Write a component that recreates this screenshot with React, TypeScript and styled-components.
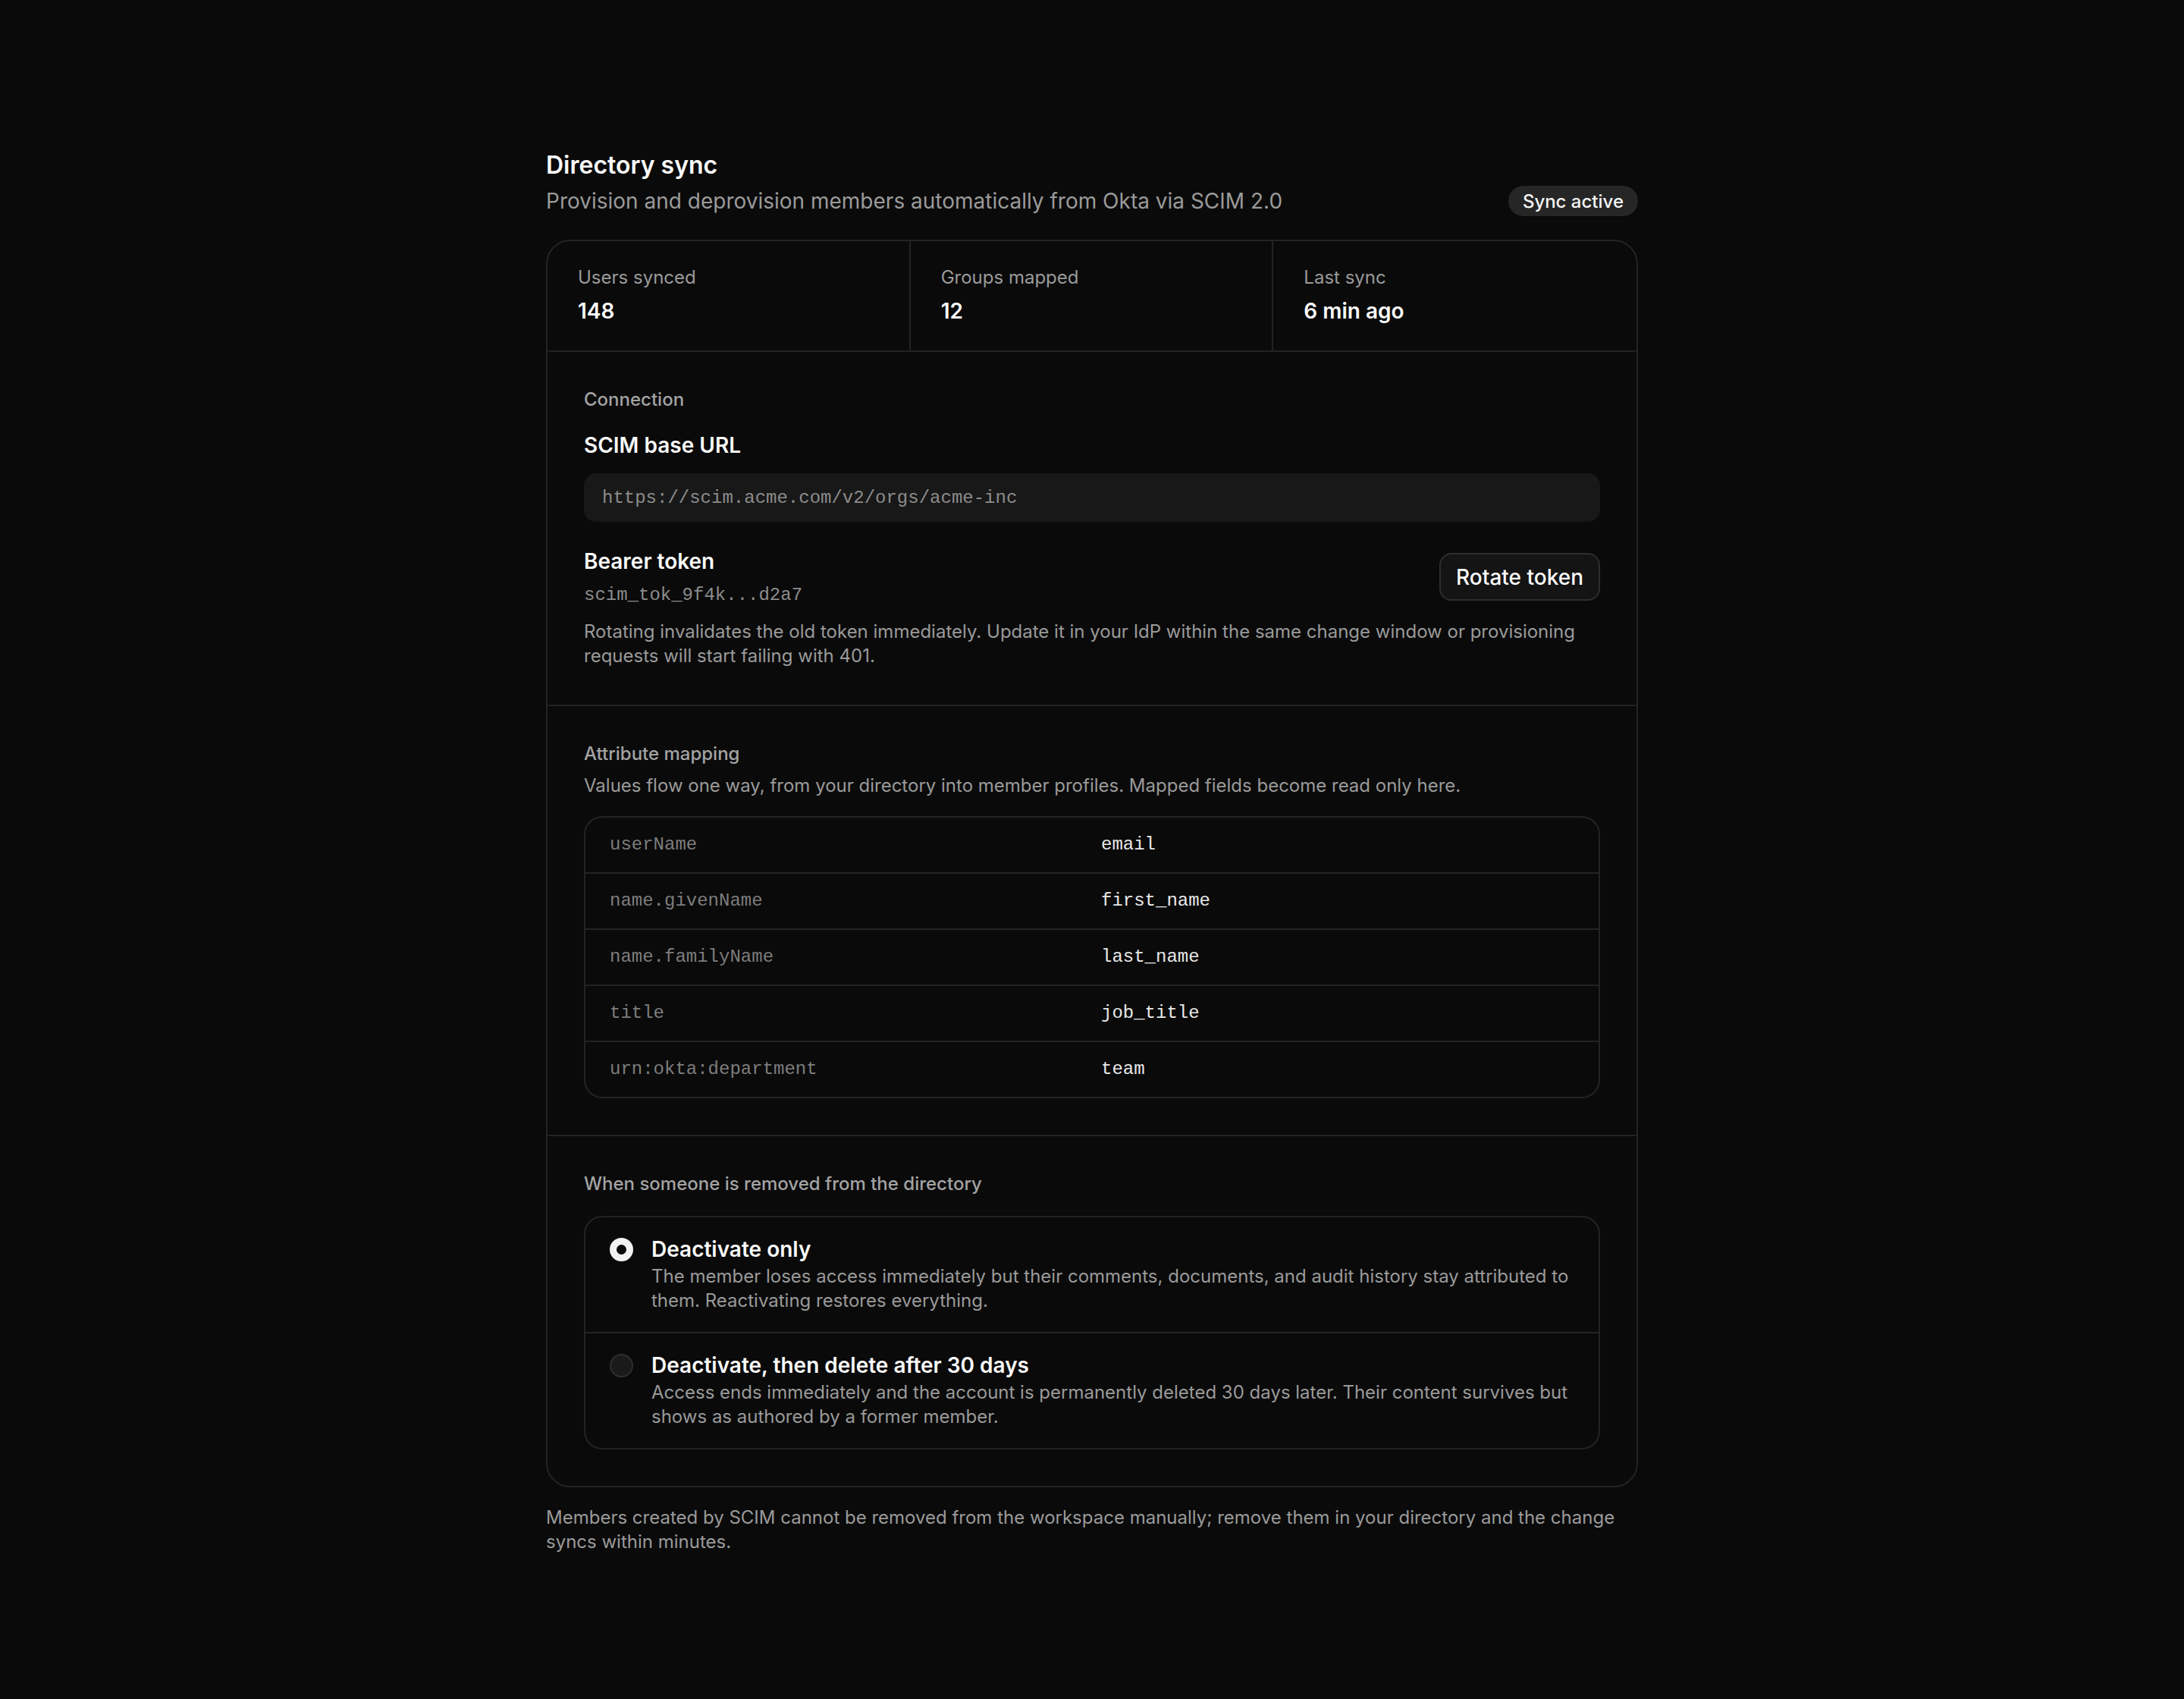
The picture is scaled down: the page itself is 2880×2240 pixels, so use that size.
import styled, { createGlobalStyle } from 'styled-components';

const GlobalStyle = createGlobalStyle`
  html, body, #root {
    margin: 0;
    padding: 0;
    background: #0a0a0a;
  }
  body {
    font-family: Inter, 'Noto Sans', sans-serif;
    color: #f2f2f2;
    -webkit-font-smoothing: antialiased;
  }
  * {
    box-sizing: border-box;
  }
`;

const mono = `'Liberation Mono', 'DejaVu Sans Mono', monospace`;

const Page = styled.main`
  display: flex;
  justify-content: center;
  padding: 198px 0 160px;
`;

const Column = styled.div`
  width: 1440px;
  display: flex;
  flex-direction: column;
`;

const Header = styled.header`
  display: flex;
  align-items: flex-end;
  justify-content: space-between;
  gap: 32px;
`;

const HeaderText = styled.div`
  display: flex;
  flex-direction: column;
  gap: 7px;
`;

const Title = styled.h1`
  margin: 0;
  font-size: 32px;
  line-height: 40px;
  font-weight: 600;
  color: #fafafa;
`;

const Subtitle = styled.p`
  margin: 0;
  font-size: 28px;
  line-height: 40px;
  color: #9a9a9a;
`;

const Badge = styled.span`
  display: inline-flex;
  align-items: center;
  height: 40px;
  padding: 0 19px;
  border-radius: 999px;
  background: #262626;
  color: #f5f5f5;
  font-size: 24px;
  font-weight: 500;
  white-space: nowrap;
`;

const Card = styled.section`
  margin-top: 31px;
  border: 2px solid #232323;
  border-radius: 32px;
  overflow: hidden;
`;

const Stats = styled.div`
  display: grid;
  grid-template-columns: repeat(3, 1fr);
  border-bottom: 2px solid #232323;
`;

const Stat = styled.div`
  display: flex;
  flex-direction: column;
  gap: 8px;
  padding: 32px 40px 32px;
  border-right: 2px solid #232323;

  &:last-child {
    border-right: none;
  }
`;

const StatLabel = styled.span`
  font-size: 24px;
  line-height: 32px;
  color: #9a9a9a;
`;

const StatValue = styled.span`
  font-size: 28px;
  line-height: 40px;
  font-weight: 600;
  color: #fafafa;
`;

const Section = styled.div`
  display: flex;
  flex-direction: column;
  padding: 45px 48px 48px;

  & + & {
    border-top: 2px solid #232323;
  }
`;

const SectionLabel = styled.h2`
  margin: 0;
  font-size: 24px;
  line-height: 36px;
  font-weight: 500;
  color: #a3a3a3;
`;

const FieldTitle = styled.h3<{ $gap?: number }>`
  margin: ${(p) => p.$gap ?? 0}px 0 0;
  font-size: 28px;
  line-height: 40px;
  font-weight: 600;
  color: #fafafa;
`;

const CodeBox = styled.div`
  margin-top: 17px;
  height: 64px;
  display: flex;
  align-items: center;
  padding: 0 24px;
  border-radius: 16px;
  background: #181818;
  font-family: ${mono};
  font-size: 24px;
  color: #8c8c8c;
`;

const TokenRow = styled.div`
  margin-top: 32px;
  display: flex;
  align-items: center;
  justify-content: space-between;
  gap: 24px;
`;

const TokenInfo = styled.div`
  display: flex;
  flex-direction: column;
  gap: 9px;

  ${FieldTitle} {
    margin: 0;
  }
`;

const TokenValue = styled.code`
  font-family: ${mono};
  font-size: 24px;
  line-height: 32px;
  color: #8c8c8c;
`;

const Button = styled.button`
  height: 63px;
  padding: 0 20px;
  border: 2px solid #2e2e2e;
  border-radius: 16px;
  background: #141414;
  color: #fafafa;
  font-family: inherit;
  font-size: 28px;
  font-weight: 500;
  cursor: pointer;
`;

const Help = styled.p<{ $gap?: number }>`
  margin: ${(p) => p.$gap ?? 16}px 0 0;
  font-size: 24px;
  line-height: 32px;
  color: #9a9a9a;
`;

const MapTable = styled.div`
  margin-top: 24px;
  border: 2px solid #232323;
  border-radius: 24px;
  overflow: hidden;
`;

const MapRow = styled.div`
  display: grid;
  grid-template-columns: 1fr 1fr;
  column-gap: 24px;
  padding: 20px 32px;
  font-family: ${mono};
  font-size: 24px;
  line-height: 32px;

  & + & {
    border-top: 2px solid #232323;
  }
`;

const MapCell = styled.span<{ $source?: boolean }>`
  color: ${(p) => (p.$source ? '#7d7d7d' : '#e8e8e8')};
`;

const Options = styled.div`
  margin-top: 24px;
  border: 2px solid #232323;
  border-radius: 24px;
  overflow: hidden;
`;

const Option = styled.label`
  display: flex;
  align-items: flex-start;
  gap: 24px;
  padding: 24px 32px 25px;
  cursor: pointer;

  & + & {
    border-top: 2px solid #232323;
  }
`;

const Radio = styled.span<{ $checked?: boolean }>`
  flex: none;
  width: 31px;
  height: 31px;
  margin-top: 3px;
  border-radius: 50%;
  background: ${(p) => (p.$checked ? '#0a0a0a' : '#1a1a1a')};
  border: ${(p) => (p.$checked ? '9px solid #f2f2f2' : '2px solid #2e2e2e')};
`;

const OptionText = styled.div`
  display: flex;
  flex-direction: column;
  gap: 2px;
`;

const OptionTitle = styled.span`
  font-size: 28px;
  line-height: 36px;
  font-weight: 600;
  color: #fafafa;
`;

const Footnote = styled.p`
  margin: 24px 0 0;
  font-size: 24px;
  line-height: 32px;
  color: #9a9a9a;
`;

const stats = [
  { label: 'Users synced', value: '148' },
  { label: 'Groups mapped', value: '12' },
  { label: 'Last sync', value: '6 min ago' },
];

const mappings = [
  ['userName', 'email'],
  ['name.givenName', 'first_name'],
  ['name.familyName', 'last_name'],
  ['title', 'job_title'],
  ['urn:okta:department', 'team'],
];

const removalOptions = [
  {
    title: 'Deactivate only',
    body: 'The member loses access immediately but their comments, documents, and audit history stay attributed to them. Reactivating restores everything.',
    checked: true,
  },
  {
    title: 'Deactivate, then delete after 30 days',
    body: 'Access ends immediately and the account is permanently deleted 30 days later. Their content survives but shows as authored by a former member.',
    checked: false,
  },
];

export default function App() {
  return (
    <>
      <GlobalStyle />
      <Page>
        <Column>
          <Header>
            <HeaderText>
              <Title>Directory sync</Title>
              <Subtitle>Provision and deprovision members automatically from Okta via SCIM 2.0</Subtitle>
            </HeaderText>
            <Badge>Sync active</Badge>
          </Header>

          <Card>
            <Stats>
              {stats.map((s) => (
                <Stat key={s.label}>
                  <StatLabel>{s.label}</StatLabel>
                  <StatValue>{s.value}</StatValue>
                </Stat>
              ))}
            </Stats>

            <Section>
              <SectionLabel>Connection</SectionLabel>
              <FieldTitle $gap={22}>SCIM base URL</FieldTitle>
              <CodeBox>https://scim.acme.com/v2/orgs/acme-inc</CodeBox>
              <TokenRow>
                <TokenInfo>
                  <FieldTitle>Bearer token</FieldTitle>
                  <TokenValue>scim_tok_9f4k...d2a7</TokenValue>
                </TokenInfo>
                <Button type="button">Rotate token</Button>
              </TokenRow>
              <Help>
                Rotating invalidates the old token immediately. Update it in your IdP within the same change window or
                provisioning requests will start failing with 401.
              </Help>
            </Section>

            <Section>
              <SectionLabel>Attribute mapping</SectionLabel>
              <Help $gap={8}>
                Values flow one way, from your directory into member profiles. Mapped fields become read only here.
              </Help>
              <MapTable>
                {mappings.map(([from, to]) => (
                  <MapRow key={from}>
                    <MapCell $source>{from}</MapCell>
                    <MapCell>{to}</MapCell>
                  </MapRow>
                ))}
              </MapTable>
            </Section>

            <Section>
              <SectionLabel>When someone is removed from the directory</SectionLabel>
              <Options>
                {removalOptions.map((o) => (
                  <Option key={o.title}>
                    <Radio $checked={o.checked} />
                    <OptionText>
                      <OptionTitle>{o.title}</OptionTitle>
                      <Help $gap={0}>{o.body}</Help>
                    </OptionText>
                  </Option>
                ))}
              </Options>
            </Section>
          </Card>

          <Footnote>
            Members created by SCIM cannot be removed from the workspace manually; remove them in your directory and
            the change syncs within minutes.
          </Footnote>
        </Column>
      </Page>
    </>
  );
}
